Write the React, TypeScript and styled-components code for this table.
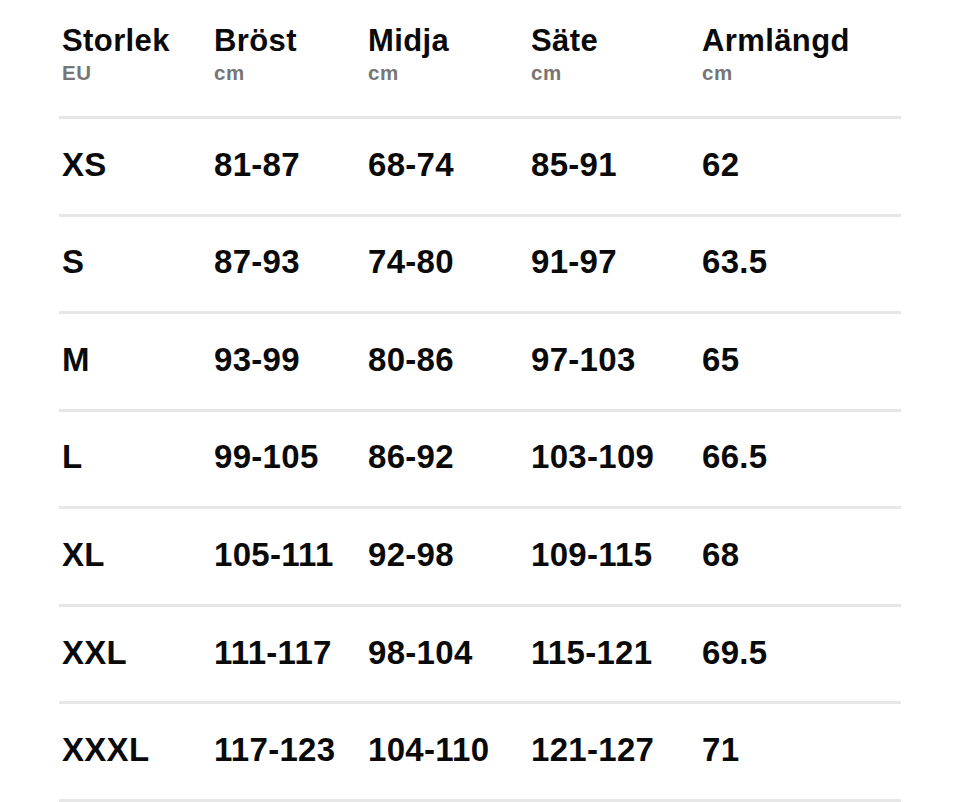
import React from 'react';
import styled, { createGlobalStyle } from 'styled-components';

const GlobalStyle = createGlobalStyle`
    html, body {
        margin: 0;
        padding: 0;
        background: #ffffff;
    }
    body {
        font-family: "Liberation Sans", Arial, sans-serif;
        color: #0a0a0a;
    }
`;

const Page = styled.div`
    padding: 0 59px;
    width: 842px;
`;

const Table = styled.div`
    display: flex;
    flex-direction: column;
`;

const columns = '152px 154px 163px 171px 1fr';

const HeaderRow = styled.div`
    display: grid;
    grid-template-columns: ${columns};
    padding: 24px 0 0 3px;
    height: 119px;
    box-sizing: border-box;
    border-bottom: 3px solid #e7e7e7;
`;

const HeadCell = styled.div`
    display: flex;
    flex-direction: column;
    gap: 3px;
`;

const HeadTitle = styled.span`
    font-size: 31px;
    line-height: 34px;
    font-weight: 700;
    letter-spacing: 0.4px;
    color: #0a0a0a;
`;

const HeadUnit = styled.span`
    font-size: 20.5px;
    line-height: 24px;
    font-weight: 700;
    letter-spacing: 0.5px;
    color: #767676;
`;

const Row = styled.div`
    display: grid;
    grid-template-columns: ${columns};
    align-items: center;
    height: 97.57px;
    box-sizing: border-box;
    padding: 0 0 3px 3px;
    border-bottom: 3px solid #e7e7e7;
`;

const Cell = styled.span`
    font-size: 33px;
    line-height: 36px;
    font-weight: 700;
    letter-spacing: 0.3px;
    color: #0a0a0a;
`;

const headers = [
    { title: 'Storlek', unit: 'EU' },
    { title: 'Bröst', unit: 'cm' },
    { title: 'Midja', unit: 'cm' },
    { title: 'Säte', unit: 'cm' },
    { title: 'Armlängd', unit: 'cm' },
];

const sizes = [
    ['XS', '81-87', '68-74', '85-91', '62'],
    ['S', '87-93', '74-80', '91-97', '63.5'],
    ['M', '93-99', '80-86', '97-103', '65'],
    ['L', '99-105', '86-92', '103-109', '66.5'],
    ['XL', '105-111', '92-98', '109-115', '68'],
    ['XXL', '111-117', '98-104', '115-121', '69.5'],
    ['XXXL', '117-123', '104-110', '121-127', '71'],
];

export default function App() {
    return (
        <>
            <GlobalStyle />
            <Page>
                <Table>
                    <HeaderRow>
                        {headers.map((h) => (
                            <HeadCell key={h.title}>
                                <HeadTitle>{h.title}</HeadTitle>
                                <HeadUnit>{h.unit}</HeadUnit>
                            </HeadCell>
                        ))}
                    </HeaderRow>
                    {sizes.map((row) => (
                        <Row key={row[0]}>
                            {row.map((value, i) => (
                                <Cell key={i}>{value}</Cell>
                            ))}
                        </Row>
                    ))}
                </Table>
            </Page>
        </>
    );
}
